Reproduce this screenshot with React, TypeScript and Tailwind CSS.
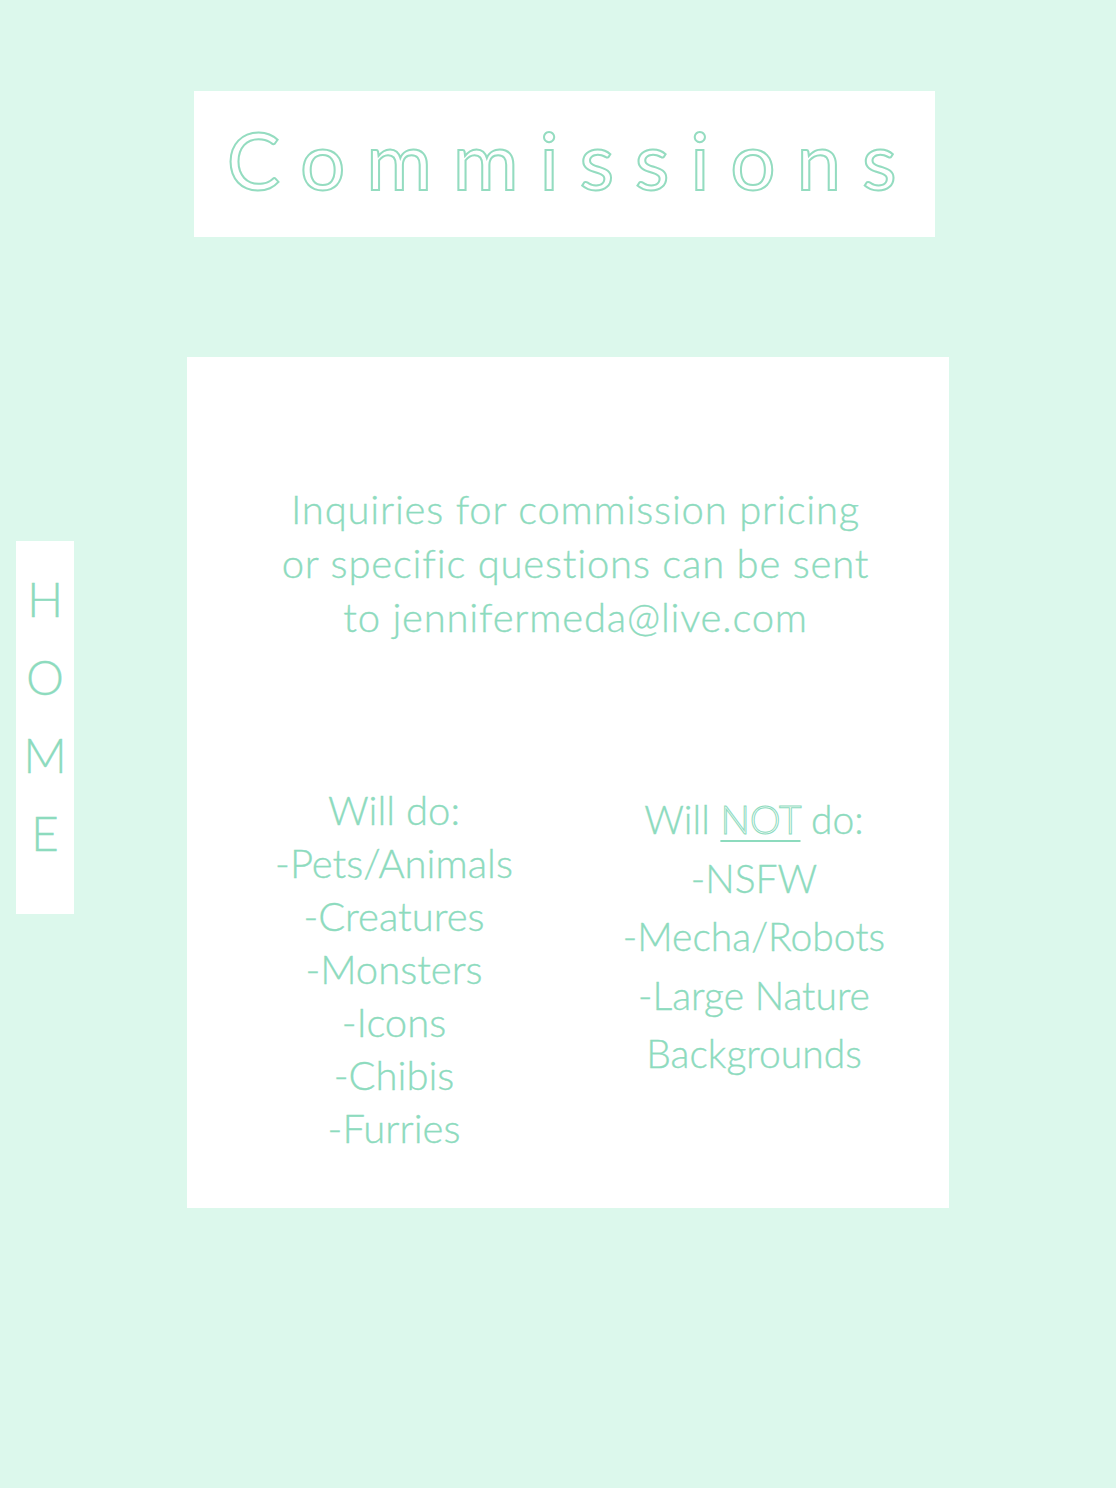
import React from "react";

const font = { fontFamily: "Lato, 'Open Sans', sans-serif" };

export default function App() {
  return (
    <div
      className="relative min-h-[1488px] w-full bg-[#dcf8ec] text-[#8ddbbe] font-light overflow-hidden"
      style={font}
    >
      <nav className="absolute left-[16px] top-[541px] flex h-[373px] w-[58px] flex-col items-center bg-white pt-[30px] [-webkit-text-stroke:0.3px_#8ddbbe]">
        {["H", "O", "M", "E"].map((l) => (
          <span key={l} className="block h-[78px] text-[48px] leading-[56px] font-light">
            {l}
          </span>
        ))}
      </nav>

      <div className="pt-[91px]">
        <div className="ml-[194px] flex h-[146px] w-[741px] items-center justify-center bg-white pb-[10px]">
          <h1 className="pl-[15px] text-[80px] font-normal leading-none tracking-[0.26em] text-transparent [-webkit-text-stroke:2px_#94dcc0]">
            Commissions
          </h1>
        </div>

        <div className="ml-[187px] mt-[120px] h-[851px] w-[762px] bg-white pt-[125px] [-webkit-text-stroke:0.35px_#8ddbbe]">
          <p className="pl-[15px] text-center text-[40px] leading-[54px] tracking-[0.02em]">
            Inquiries for commission pricing
            <br />
            or specific questions can be sent
            <br />
            to jennifermeda@live.com
          </p>

          <div className="mt-[140px] grid grid-cols-[300px_300px] gap-[60px] pl-[57px]">
            <div className="text-center text-[40px] leading-[53px]">
              <div>Will do:</div>
              <div>-Pets/Animals</div>
              <div>-Creatures</div>
              <div>-Monsters</div>
              <div>-Icons</div>
              <div>-Chibis</div>
              <div>-Furries</div>
            </div>
            <div className="pt-[6px] text-center text-[39px] leading-[58.5px]">
              <div>
                Will{" "}
                <span className="text-transparent underline decoration-[#8ddbbe] decoration-2 underline-offset-[6px] [-webkit-text-stroke:1px_#8ddbbe]">
                  NOT
                </span>{" "}
                do:
              </div>
              <div>-NSFW</div>
              <div>-Mecha/Robots</div>
              <div>-Large Nature</div>
              <div>Backgrounds</div>
            </div>
          </div>
        </div>
      </div>
    </div>
  );
}
